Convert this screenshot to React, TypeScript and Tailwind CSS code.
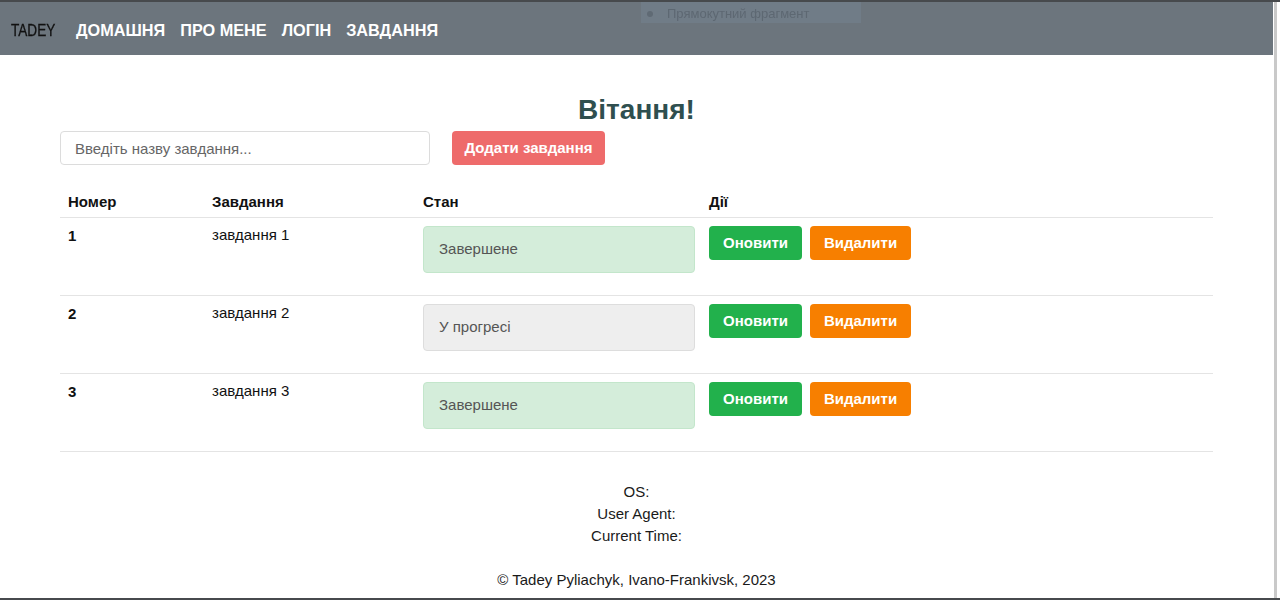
import React from 'react';

type Task = { id: number; title: string; done: boolean };

const tasks: Task[] = [
  { id: 1, title: 'завдання 1', done: true },
  { id: 2, title: 'завдання 2', done: false },
  { id: 3, title: 'завдання 3', done: true },
];

const navLinks = ['ДОМАШНЯ', 'ПРО МЕНЕ', 'ЛОГІН', 'ЗАВДАННЯ'];

const Header: React.FC = () => (
  <header className="relative h-[53px] bg-[#6c757d] flex items-center pl-[11px] pt-[4px]">
    <span className="inline-block origin-left [transform:scaleX(0.8)] text-[17px] text-[#111] w-[65px] whitespace-nowrap [-webkit-text-stroke:0.3px_#111]">
      TADEY
    </span>
    <nav className="flex items-center gap-[15px]">
      {navLinks.map((link) => (
        <a key={link} className="text-white font-bold text-[16.25px] leading-none cursor-pointer">
          {link}
        </a>
      ))}
    </nav>
    {/* snipping tool hint overlay */}
    <div className="absolute left-[641px] top-0 h-[21px] w-[220px] bg-[#727e8a] flex items-center pl-[6px] gap-[14px] opacity-80">
      <span className="w-[6px] h-[6px] rounded-full bg-[#5d6873] mt-[2px]" />
      <span className="text-[13px] text-[#5a6570] blur-[0.6px] mt-[3px]">Прямокутний фрагмент</span>
    </div>
  </header>
);

const StatusBox: React.FC<{ done: boolean }> = ({ done }) => (
  <div
    className={`h-[47px] w-[272px] mb-[15px] rounded-[4px] border flex items-center px-[15px] text-[15px] text-[#555] ${
      done ? 'bg-[#d4edda] border-[#c3e6cb]' : 'bg-[#eeeeee] border-[#dddddd]'
    }`}
  >
    {done ? 'Завершене' : 'У прогресі'}
  </div>
);

const TaskTable: React.FC = () => (
  <table className="w-full mt-5 border-collapse text-[15px] text-[#111] table-fixed">
    <colgroup>
      <col className="w-[144px]" />
      <col className="w-[211px]" />
      <col className="w-[286px]" />
      <col />
    </colgroup>
    <thead>
      <tr className="border-b border-[#e4e4e4]">
        <th className="text-left font-bold px-2 pt-[8px] pb-[7px] leading-[17px]">Номер</th>
        <th className="text-left font-bold px-2 pt-[8px] pb-[7px] leading-[17px]">Завдання</th>
        <th className="text-left font-bold px-2 pt-[8px] pb-[7px] leading-[17px]">Стан</th>
        <th className="text-left font-bold px-2 pt-[8px] pb-[7px] leading-[17px]">Дії</th>
      </tr>
    </thead>
    <tbody>
      {tasks.map((t) => (
        <tr key={t.id} className="border-b border-[#e4e4e4] align-top">
          <td className="px-2 pt-[8px] pb-[7px] font-bold leading-[20px]">{t.id}</td>
          <td className="px-2 pt-[7px] pb-[7px] leading-[20px]">{t.title}</td>
          <td className="px-2 pt-[8px] pb-[7px]">
            <StatusBox done={t.done} />
          </td>
          <td className="px-2 pt-[8px] pb-[7px]">
            <div className="flex gap-2">
              <button className="h-[34px] w-[93px] rounded-[4px] bg-[#22b14c] text-white font-bold text-[15px]">
                Оновити
              </button>
              <button className="h-[34px] w-[101px] rounded-[4px] bg-[#f77f00] text-white font-bold text-[15px]">
                Видалити
              </button>
            </div>
          </td>
        </tr>
      ))}
    </tbody>
  </table>
);

export default function App() {
  return (
    <div className="h-[600px] flex flex-col border-t-2 border-b-2 border-[#474a4d] overflow-hidden bg-white font-['Liberation_Sans',Arial,sans-serif]">
      <div className="flex flex-1 min-h-0">
        <div className="flex-1 min-w-0">
          <Header />
          <main className="px-[60px]">
            <h1 className="text-center text-[28px] leading-[32px] font-bold text-[#2f4f4f] mt-[39px] mb-[5px]">
              Вітання!
            </h1>
            <div className="flex items-center gap-[22px]">
              <input
                placeholder="Введіть назву завдання..."
                className="w-[370px] h-[34px] border border-[#dcdcdc] rounded-[4px] px-[14px] text-[15px] placeholder:text-[#666] outline-none"
              />
              <button className="h-[34px] w-[153px] rounded-[4px] bg-[#ee6b6b] text-white font-bold text-[15px]">
                Додати завдання
              </button>
            </div>
            <TaskTable />
            <footer className="text-center text-[15px] text-[#1a1a1a] leading-[22px] mt-[29px]">
              <p>OS:</p>
              <p>User Agent:</p>
              <p>Current Time:</p>
              <p className="mt-[22px]">© Tadey Pyliachyk, Ivano-Frankivsk, 2023</p>
            </footer>
          </main>
        </div>
        <div className="w-[7px] bg-white flex">
          <div className="w-[3px] bg-[#c9c9c9] ml-[1px]" />
        </div>
      </div>
    </div>
  );
}
